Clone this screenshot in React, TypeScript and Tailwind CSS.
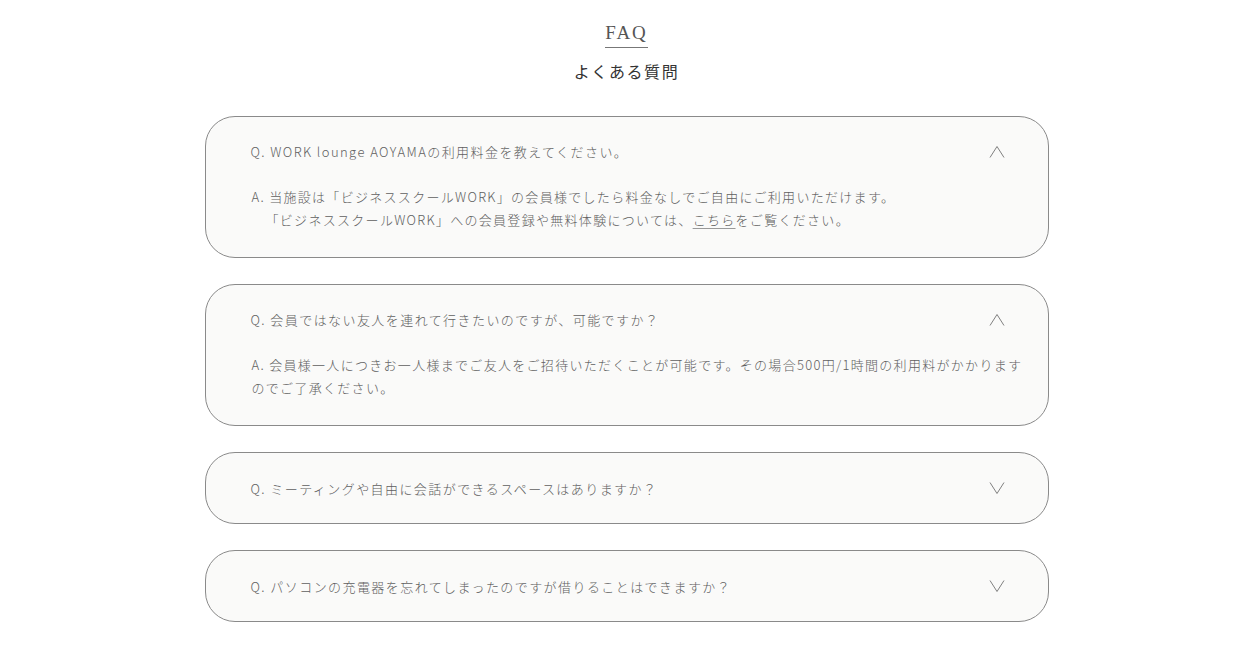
import React from 'react';

interface FaqItem {
  q: string;
  a?: React.ReactNode;
  open: boolean;
}

const items: FaqItem[] = [
  {
    q: 'Q. WORK lounge AOYAMAの利用料金を教えてください。',
    open: true,
    a: (
      <>
        <p>A. 当施設は「ビジネススクールWORK」の会員様でしたら料金なしでご自由にご利用いただけます。</p>
        <p className="pl-[14px]">
          「ビジネススクールWORK」への会員登録や無料体験については、
          <a href="#" className="underline underline-offset-[3px] decoration-[#999]">こちら</a>
          をご覧ください。
        </p>
      </>
    ),
  },
  {
    q: 'Q. 会員ではない友人を連れて行きたいのですが、可能ですか？',
    open: true,
    a: (
      <p className="whitespace-nowrap">
        A. 会員様一人につきお一人様までご友人をご招待いただくことが可能です。その場合500円/1時間の利用料がかかります
        <br />
        のでご了承ください。
      </p>
    ),
  },
  { q: 'Q. ミーティングや自由に会話ができるスペースはありますか？', open: false },
  { q: 'Q. パソコンの充電器を忘れてしまったのですが借りることはできますか？', open: false },
];

const Chevron = ({ up }: { up: boolean }) => (
  <svg width="16" height="14" viewBox="0 0 16 14" fill="none" className="shrink-0">
    {up ? (
      <polyline points="1,12.5 8,1.5 15,12.5" stroke="#808080" strokeWidth="1" />
    ) : (
      <polyline points="1,1.5 8,12.5 15,1.5" stroke="#808080" strokeWidth="1" />
    )}
  </svg>
);

export default function App() {
  return (
    <div
      className="min-h-screen bg-white pl-[3px] pt-[21px] pb-10 text-[#606060]"
      style={{ fontFamily: '"Noto Sans CJK JP", "Noto Sans", sans-serif' }}
    >
      <div className="flex flex-col items-center">
        <h2
          className="border-b border-[#777] pb-[2px] text-[19px] leading-[24px] tracking-[0.1em] text-[#555]"
          style={{ fontFamily: '"Liberation Serif", serif' }}
        >
          FAQ
        </h2>
        <p className="mt-[11px] text-[16px] leading-[24px] tracking-[0.1em] text-[#333]">よくある質問</p>
      </div>

      <div className="mx-auto mt-[33px] flex w-[844px] flex-col gap-[26px]">
        {items.map((item, i) => (
          <div
            key={i}
            className={`rounded-[30px] border border-[#8a8a8a] bg-[#fafaf9] pl-[45px] ${
              item.open ? 'pt-[23px] pb-[26px]' : 'py-[23.5px]'
            }`}
          >
            <div className="flex items-center justify-between pr-[43px]">
              <span className="text-[13px] font-light leading-[23px] tracking-[0.11em]">{item.q}</span>
              <Chevron up={item.open} />
            </div>
            {item.open && item.a && (
              <div className="mt-[22px] pl-[1px] text-[13px] font-light leading-[23px] tracking-[0.1em]">
                {item.a}
              </div>
            )}
          </div>
        ))}
      </div>
    </div>
  );
}
